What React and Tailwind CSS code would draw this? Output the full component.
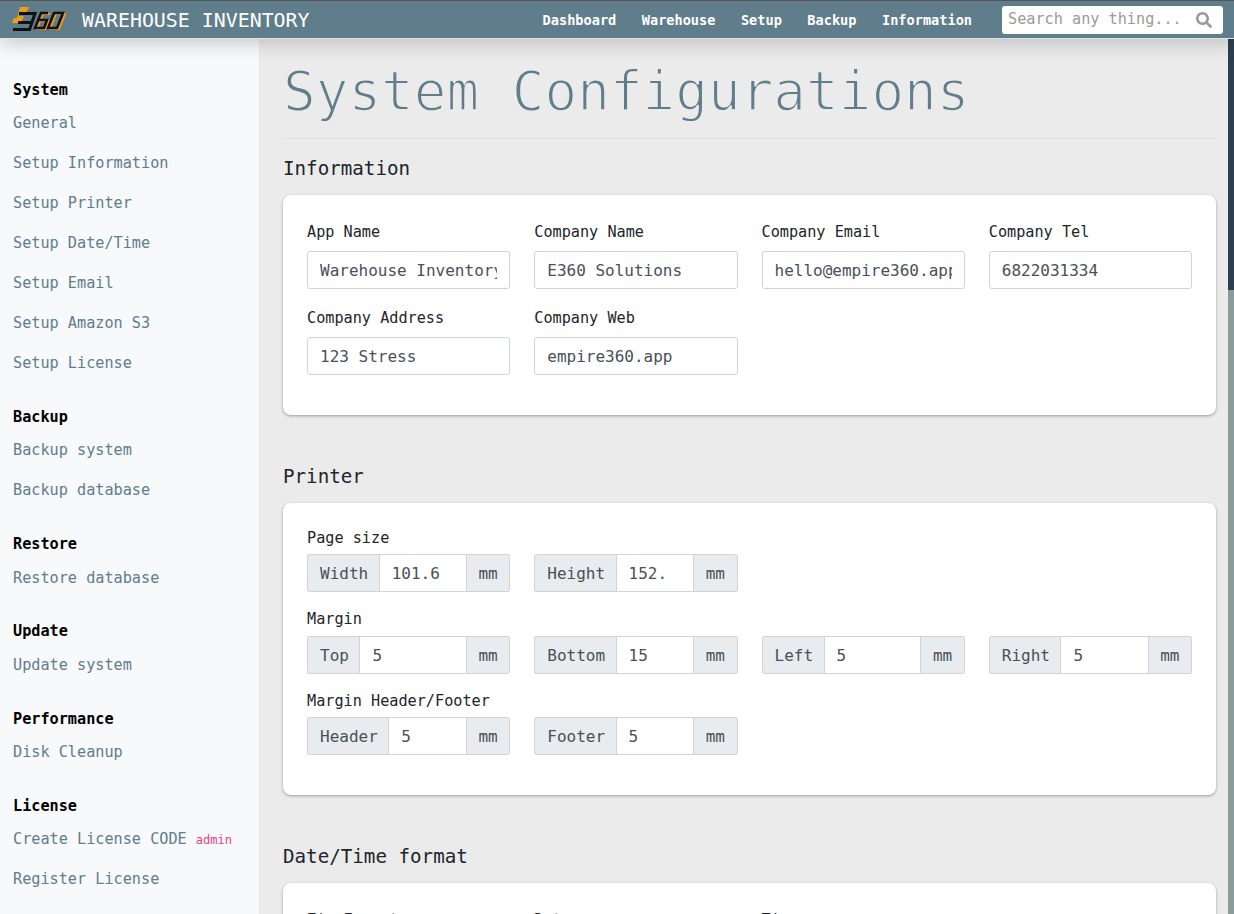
import React from "react";
import { FaSearch } from "react-icons/fa";

const MONO = "font-['DejaVu_Sans_Mono',monospace]";

const sideGroups = [
  { title: "System", items: ["General", "Setup Information", "Setup Printer", "Setup Date/Time", "Setup Email", "Setup Amazon S3", "Setup License"] },
  { title: "Backup", items: ["Backup system", "Backup database"] },
  { title: "Restore", items: ["Restore database"] },
  { title: "Update", items: ["Update system"] },
  { title: "Performance", items: ["Disk Cleanup"] },
  { title: "License", items: ["Create License CODE", "Register License"] },
];

function Logo() {
  return (
    <svg width="56" height="26" viewBox="0 0 56 26" className="shrink-0" fill="none" strokeLinejoin="miter">
      {/* orange flash behind the 3 */}
      <polygon points="10,0 19,0 16,6 10,6 8,9 14,9 11,16 2,16 4,11 7,11" fill="#f39c12" />
      <g stroke="#f39c12" strokeWidth="2">
        <polyline points="40,7 33,7 27,22 36,22 39,14 31,14" />
        <polygon points="46,7 55,7 49,22 40,22" />
      </g>
      <g stroke="#111" strokeWidth="3">
        <polyline points="9,6.5 25,6.5 19.500,22.500 3,22.500" />
        <polyline points="22,15.500 8,15.500" />
        <polyline points="38,6 31,6 25,21 34,21 37,13 29,13" strokeWidth="2.500" />
        <polygon points="44,6 53,6 47,21 38,21" strokeWidth="2.500" />
      </g>
    </svg>
  );
}

function Header() {
  return (
    <header className="relative z-10 flex h-[39px] items-center border-t border-t-[#555] border-b border-b-[#dfe4e7] bg-[#607d8b] pl-[10px] pr-[11px] shadow-[0_4px_20px_rgba(0,0,0,0.2)]">
      <Logo />
      <div className="ml-4 pt-[2px] text-[19.9px] text-white">WAREHOUSE INVENTORY</div>
      <nav className="ml-auto flex gap-[25.5px] pt-[1px] text-[13.6px] font-bold text-white">
        {["Dashboard", "Warehouse", "Setup", "Backup", "Information"].map((n) => (
          <span key={n}>{n}</span>
        ))}
      </nav>
      <div className="ml-[30px] flex h-[28px] w-[221px] items-center rounded-[3px] bg-white pl-[6px] pr-[11px] text-[15.2px] text-[#9a9a9a]">
        <span>Search any thing...</span>
        <FaSearch size={16} className="ml-auto text-[#9a9a9a]" />
      </div>
    </header>
  );
}

function Sidebar() {
  return (
    <aside className="w-[259px] shrink-0 overflow-hidden bg-[#f8f9fa] pl-[13px] pt-[38.6px] text-[15.2px]">
      {sideGroups.map((g) => (
        <div key={g.title} className="mb-[22.3px]">
          <div className="mb-[1px] h-[24px] font-bold leading-[24px] text-black">{g.title}</div>
          {g.items.map((item) => (
            <div key={item} className="flex h-[40px] items-center pt-[1.5px] text-[#5f7d8c]">
              {item}
              {item === "Create License CODE" && <span className="ml-[9px] text-[12px] text-[#e83e8c]">admin</span>}
            </div>
          ))}
        </div>
      ))}
    </aside>
  );
}

function Field({ label, value }) {
  return (
    <div className="mb-4">
      <div className="mb-2 h-[24px] text-[15.2px] leading-[26px] text-[#212529]">{label}</div>
      <input
        readOnly
        defaultValue={value}
        className={`h-[38px] w-full rounded-[3px] border border-[#ced4da] bg-white px-3 text-[16px] text-[#495057] outline-none ${MONO}`}
      />
    </div>
  );
}

function Addon({ children, side }) {
  const cls = side === "left" ? "rounded-l-[3px] border-r-0 pl-3 pr-[10.5px]" : "rounded-r-[3px] border-l-0 px-[11.5px]";
  return (
    <span className={`flex shrink-0 items-center border border-[#ced4da] bg-[#e9ecef] pt-[2px] text-[16px] text-[#495057] ${cls}`}>
      {children}
    </span>
  );
}

function UnitField({ label, value }) {
  return (
    <div className="flex h-[38px]">
      <Addon side="left">{label}</Addon>
      <input
        readOnly
        defaultValue={value}
        className={`w-0 min-w-0 flex-1 border border-[#ced4da] bg-white px-3 pt-[2px] text-[16px] text-[#495057] outline-none ${MONO}`}
      />
      <Addon side="right">mm</Addon>
    </div>
  );
}

function UnitRow({ title, fields }) {
  return (
    <div className="mb-4">
      <div className="mb-2 h-[19.4px] text-[15.2px] leading-[23px] text-[#212529]">{title}</div>
      <div className="grid grid-cols-4 gap-x-6">
        {fields.map(([label, value]) => (
          <UnitField key={label} label={label} value={value} />
        ))}
      </div>
    </div>
  );
}

function Section({ title, children }) {
  return (
    <section className="mb-[49px]">
      <h2 className="mb-[15px] h-[24px] text-[19.2px] leading-[26px] text-[#212529]">{title}</h2>
      <div className="rounded-[8px] bg-white px-6 pt-6 pb-6 shadow-[0_1px_3px_rgba(0,0,0,0.35)]">{children}</div>
    </section>
  );
}

export default function App() {
  return (
    <div className={`flex h-[914px] w-[1234px] flex-col overflow-hidden bg-[#ebebeb] ${MONO}`}>
      <Header />
      <div className="flex min-h-0 flex-1">
        <Sidebar />
        <main className="min-w-0 flex-1 overflow-hidden pl-6 pr-3">
          <h1 className="mt-[23px] h-[60px] text-[54.3px] leading-[60px] text-[#607d8b] [-webkit-text-stroke:1.8px_#ebebeb]">System Configurations</h1>
          <hr className="mt-[16px] mb-[17px] border-t border-[#e0e0e0]" />
          <Section title="Information">
            <div className="grid grid-cols-4 gap-x-6">
              <Field label="App Name" value="Warehouse Inventory" />
              <Field label="Company Name" value="E360 Solutions" />
              <Field label="Company Email" value="hello@empire360.app" />
              <Field label="Company Tel" value="6822031334" />
              <Field label="Company Address" value="123 Stress" />
              <Field label="Company Web" value="empire360.app" />
            </div>
          </Section>
          <Section title="Printer">
            <UnitRow title="Page size" fields={[["Width", "101.6"], ["Height", "152."]]} />
            <UnitRow title="Margin" fields={[["Top", "5"], ["Bottom", "15"], ["Left", "5"], ["Right", "5"]]} />
            <UnitRow title="Margin Header/Footer" fields={[["Header", "5"], ["Footer", "5"]]} />
          </Section>
          <Section title="Date/Time format">
            <div className="grid grid-cols-4 gap-x-6">
              <Field label="Zip Format" value="" />
              <Field label="Date" value="" />
              <Field label="Time" value="" />
            </div>
          </Section>
        </main>
        <div className="flex w-[6px] shrink-0 flex-col">
          <div className="h-[251px] bg-[#2c3e50]" />
          <div className="flex-1 bg-[#8b9a9a]" />
        </div>
      </div>
    </div>
  );
}
